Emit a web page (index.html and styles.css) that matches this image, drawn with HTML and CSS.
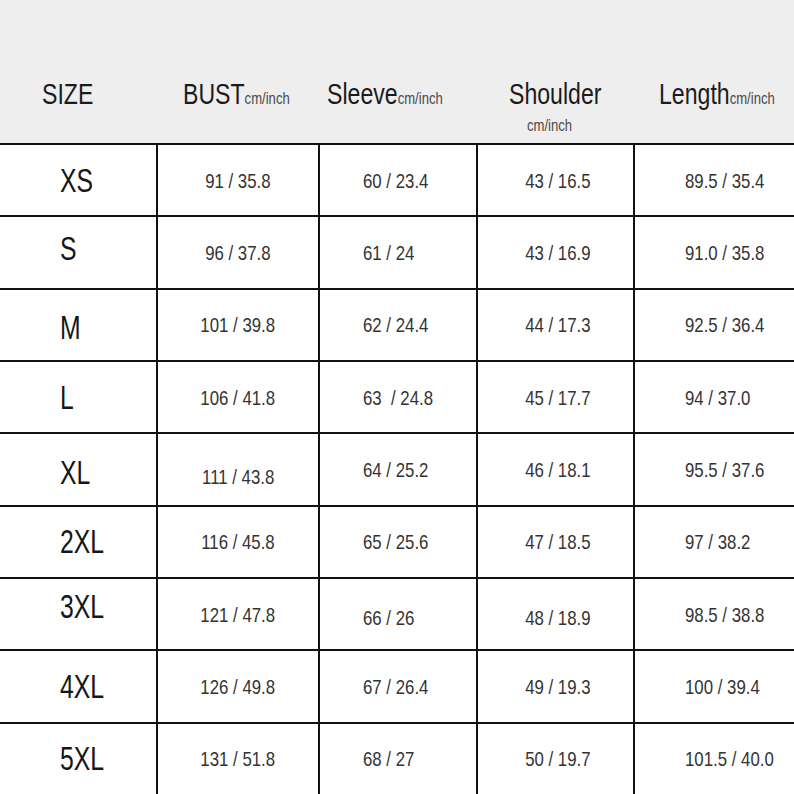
FILE: index.html
```html
<!DOCTYPE html>
<html lang="en">
<head>
<meta charset="utf-8">
<title>Size Chart</title>
<link rel="stylesheet" href="styles.css">
</head>
<body>
<div class="chart">
  <div class="head">
    <div class="hcell h-size"><span class="t">SIZE</span></div>
    <div class="hcell h-bust"><span class="t">BUST<small>cm/inch</small></span></div>
    <div class="hcell h-sleeve"><span class="t">Sleeve<small>cm/inch</small></span></div>
    <div class="hcell h-shoulder"><span class="t">Shoulder</span><span class="t sub">cm/inch</span></div>
    <div class="hcell h-length"><span class="t">Length<small>cm/inch</small></span></div>
  </div>
  <div class="grid">
    <div class="cell size"><span class="sz">XS</span></div>
    <div class="cell bust"><span class="v">91 / 35.8</span></div>
    <div class="cell sleeve"><span class="v">60 / 23.4</span></div>
    <div class="cell shoulder"><span class="v">43 / 16.5</span></div>
    <div class="cell length"><span class="v">89.5 / 35.4</span></div>

    <div class="cell size"><span class="sz up4">S</span></div>
    <div class="cell bust"><span class="v">96 / 37.8</span></div>
    <div class="cell sleeve"><span class="v">61 / 24</span></div>
    <div class="cell shoulder"><span class="v">43 / 16.9</span></div>
    <div class="cell length"><span class="v">91.0 / 35.8</span></div>

    <div class="cell size"><span class="sz dn3">M</span></div>
    <div class="cell bust"><span class="v">101 / 39.8</span></div>
    <div class="cell sleeve"><span class="v">62 / 24.4</span></div>
    <div class="cell shoulder"><span class="v">44 / 17.3</span></div>
    <div class="cell length"><span class="v">92.5 / 36.4</span></div>

    <div class="cell size"><span class="sz">L</span></div>
    <div class="cell bust"><span class="v">106 / 41.8</span></div>
    <div class="cell sleeve"><span class="v">63 &nbsp;/ 24.8</span></div>
    <div class="cell shoulder"><span class="v">45 / 17.7</span></div>
    <div class="cell length"><span class="v">94 / 37.0</span></div>

    <div class="cell size"><span class="sz dn3">XL</span></div>
    <div class="cell bust"><span class="v dn7">111 / 43.8</span></div>
    <div class="cell sleeve"><span class="v">64 / 25.2</span></div>
    <div class="cell shoulder"><span class="v">46 / 18.1</span></div>
    <div class="cell length"><span class="v">95.5 / 37.6</span></div>

    <div class="cell size"><span class="sz">2XL</span></div>
    <div class="cell bust"><span class="v">116 / 45.8</span></div>
    <div class="cell sleeve"><span class="v">65 / 25.6</span></div>
    <div class="cell shoulder"><span class="v">47 / 18.5</span></div>
    <div class="cell length"><span class="v">97 / 38.2</span></div>

    <div class="cell size"><span class="sz up8">3XL</span></div>
    <div class="cell bust"><span class="v">121 / 47.8</span></div>
    <div class="cell sleeve"><span class="v dn3">66 / 26</span></div>
    <div class="cell shoulder"><span class="v dn3">48 / 18.9</span></div>
    <div class="cell length"><span class="v">98.5 / 38.8</span></div>

    <div class="cell size"><span class="sz">4XL</span></div>
    <div class="cell bust"><span class="v">126 / 49.8</span></div>
    <div class="cell sleeve"><span class="v">67 / 26.4</span></div>
    <div class="cell shoulder"><span class="v">49 / 19.3</span></div>
    <div class="cell length"><span class="v">100 / 39.4</span></div>

    <div class="cell size"><span class="sz">5XL</span></div>
    <div class="cell bust"><span class="v">131 / 51.8</span></div>
    <div class="cell sleeve"><span class="v">68 / 27</span></div>
    <div class="cell shoulder"><span class="v">50 / 19.7</span></div>
    <div class="cell length"><span class="v">101.5 / 40.0</span></div>
  </div>
</div>
</body>
</html>
```
FILE: styles.css
```css
html, body {
  margin: 0;
  padding: 0;
  background: #ffffff;
  font-family: "Liberation Sans", Arial, sans-serif;
}

.chart {
  width: 794px;
  height: 794px;
  overflow: hidden;
}

/* ---------- header ---------- */
.head {
  display: grid;
  grid-template-columns: 156px 160px 156px 155px 159px;
  column-gap: 2px;
  height: 143px;
  background: #eeeeee;
}

.hcell {
  padding-top: 79px;
  font-size: 30px;
  line-height: 30px;
  color: #1b1b1b;
  white-space: nowrap;
}

.t {
  display: inline-block;
  transform: scaleX(0.77);
  transform-origin: left center;
  white-space: nowrap;
}

.t small {
  font-size: 17px;
  color: #4a4a4a;
}

.h-size { padding-left: 42px; }
.h-bust { padding-left: 25px; }
.h-sleeve { padding-left: 7px; }
.h-length { padding-left: 24px; }

.h-shoulder {
  display: flex;
  flex-direction: column;
  align-items: flex-start;
  padding-left: 31px;
}

.t.sub {
  font-size: 17px;
  line-height: 17px;
  color: #4a4a4a;
  margin-top: 8px;
  margin-left: 18px;
}

/* ---------- body grid ---------- */
.grid {
  display: grid;
  grid-template-columns: 156px 160px 156px 155px 159px;
  grid-template-rows: repeat(9, 1fr);
  gap: 2px;
  padding-top: 2px;
  height: 651px;
  box-sizing: border-box;
  background: #121212;
}

.cell {
  background: #ffffff;
  display: flex;
  align-items: center;
}

.sz {
  display: inline-block;
  font-size: 33px;
  line-height: 1;
  color: #161616;
  transform: scaleX(0.75);
  transform-origin: left center;
}

.v {
  display: inline-block;
  font-size: 21px;
  line-height: 1;
  color: #333333;
  white-space: nowrap;
  transform: scaleX(0.8);
  transform-origin: left center;
}

.size { padding-left: 60px; }

.bust { justify-content: center; }
.bust .v { transform-origin: center center; }

.sleeve { padding-left: 43px; }

.shoulder { justify-content: center; padding-left: 5px; }
.shoulder .v { transform-origin: center center; }

.length { padding-left: 50px; }

/* small vertical irregularities of the printed chart */
.up4 { margin-bottom: 8px; }
.up8 { margin-bottom: 16px; }
.dn3 { margin-top: 6px; }
.dn7 { margin-top: 14px; }
```
